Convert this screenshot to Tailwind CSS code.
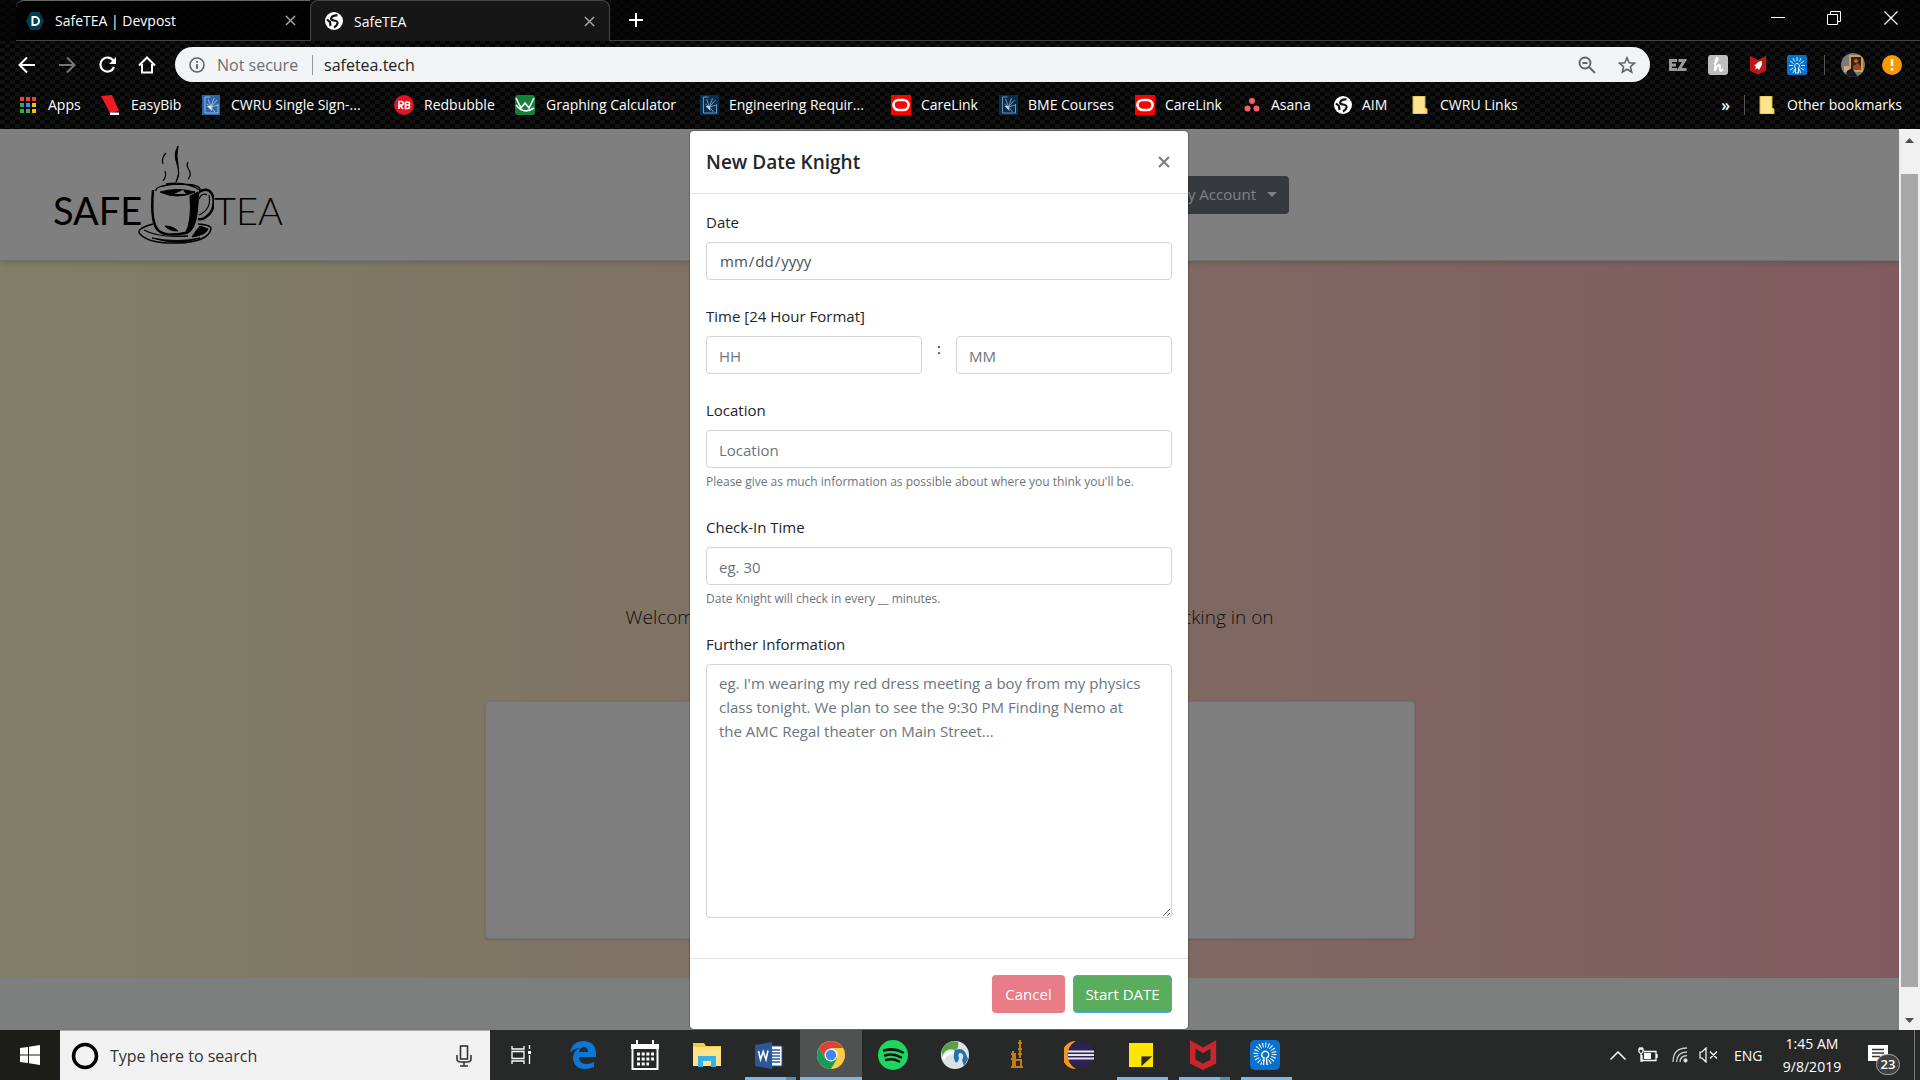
<!DOCTYPE html>
<html lang="en">
<head>
<meta charset="utf-8">
<title>SafeTEA</title>
<script src="https://cdn.jsdelivr.net/npm/@tailwindcss/browser@4"></script>
</head>
<body class="h-screen flex flex-col overflow-hidden bg-black font-['Open_Sans','Noto_Sans',sans-serif] text-[15px] text-[#212529]">
<svg class="hidden">
  <symbol id="globe" viewBox="0 0 18 18"><circle cx="9" cy="9" r="9" fill="#fff"/><path d="M12.500 3.500Q8 3 6.500 5.500T9 8.500q4 .5 3.500 3T9 15.500M2 7.500l3 2.500.5 4" fill="none" stroke="#111" stroke-width="2.200"/></symbol>
  <symbol id="cwru" viewBox="0 0 18 20"><path d="M3 2v16h13M16 9v9M3 2h5M9 12L6 4M9 12L12 3M9 12l6-7M9 12l7-2M9 12l-4-3M9 12l4 5" stroke="#b9cde0" stroke-width=".8" fill="none"/><path d="M5 11l4 0 1 5z" fill="#fff"/></symbol>
  <symbol id="oracle" viewBox="0 0 20 20"><path fill="#f00" d="M0 0h20v20H0z"/><rect x="2.500" y="5" width="15" height="10" rx="5" fill="none" stroke="#fff" stroke-width="2.600"/></symbol>
  <symbol id="folder" viewBox="0 0 16 18"><path d="M1 0h12v12l2 1v5H1z" fill="#ffe48e" stroke="#d9b13b"/><path d="M12.500 17v-4.500h2V17z" fill="#ffd75e"/></symbol>
  <symbol id="rays" viewBox="0 0 30 30"><rect width="30" height="30" rx="5" fill="#0672cb"/><g stroke="#fff" fill="none"><circle cx="15" cy="14" r="9" stroke-width="5" stroke-dasharray="1 1.827"/><path d="M12 21h6v7h-6z" fill="#0672cb" stroke="none"/><path d="M13.500 25l.5-7a3.500 3.500 0 1 1 2.500 0l.5 7" stroke-width="1.400"/></g></symbol>
</svg>

<header class="shrink-0 h-[129px] flex flex-col bg-[repeating-conic-gradient(#040404_0%_25%,#101111_0%_50%)] bg-[length:10px_8px] text-white text-[14px]">
  <div class="h-[41px] flex items-stretch bg-[#050505]/60">
    <div class="w-[294px] ml-4 pl-[10px] pr-[14px] flex items-center gap-[11px] border-t border-[#666] border-b border-b-[#444] rounded-tl-lg bg-black/60">
      <svg class="w-[18px] h-[18px]" viewBox="0 0 18 18"><path d="M4.500 0h9L18 9l-4.500 9h-9L0 9z" fill="#003e54"/><path d="M6.500 5v8h2.500a4 4 0 0 0 0-8z" fill="none" stroke="#fff" stroke-width="2"/></svg>
      <span class="flex-1">SafeTEA | Devpost</span>
      <button aria-label="Close tab" class="text-[#aaa]"><svg class="w-[11px] h-[11px]" viewBox="0 0 12 12" stroke="currentColor" stroke-width="1.500"><path d="M1 1l10 10M11 1L1 11"/></svg></button>
    </div>
    <div class="w-[300px] px-[14px] flex items-center gap-[11px] border border-b-0 border-[#444] rounded-t-lg bg-[#1b1b1b]/80">
      <svg class="w-[18px] h-[18px]"><use href="#globe"/></svg>
      <span class="flex-1">SafeTEA</span>
      <button aria-label="Close tab" class="text-[#aaa]"><svg class="w-[11px] h-[11px]" viewBox="0 0 12 12" stroke="currentColor" stroke-width="1.500"><path d="M1 1l10 10M11 1L1 11"/></svg></button>
    </div>
    <div class="flex-1 flex items-center justify-between pl-[18px] border-b border-[#444]">
      <button aria-label="New tab"><svg class="w-4 h-4" viewBox="0 0 16 16" stroke="#fff" stroke-width="2"><path d="M8 1v14M1 8h14"/></svg></button>
      <div class="flex self-start h-9">
        <button aria-label="Minimize" class="w-14 flex items-center justify-center"><svg class="w-[14px] h-[14px]" viewBox="0 0 14 14" stroke="#fff"><path d="M0 6.500h14"/></svg></button>
        <button aria-label="Restore" class="w-14 flex items-center justify-center"><svg class="w-[14px] h-[14px]" viewBox="0 0 14 14" stroke="#fff" fill="none"><path d="M.5 3.500h10v10H.5zM3.500 3V.5h10v10H11"/></svg></button>
        <button aria-label="Close" class="w-[58px] flex items-center justify-center"><svg class="w-[14px] h-[14px]" viewBox="0 0 14 14" stroke="#fff" stroke-width="1.200"><path d="M.5.5l13 13M13.500.5l-13 13"/></svg></button>
      </div>
    </div>
  </div>

  <div class="h-[47px] flex items-center pl-[18px] pr-[18px]">
    <button aria-label="Back" class="w-10"><svg class="w-[18px] h-[18px]" viewBox="0 0 18 18" fill="none" stroke="#fff" stroke-width="2"><path d="M17 9H2M9 1.500L1.500 9 9 16.500"/></svg></button>
    <button aria-label="Forward" class="w-10"><svg class="w-[18px] h-[18px]" viewBox="0 0 18 18" fill="none" stroke="#777" stroke-width="2"><path d="M1 9h15M9 1.500L16.500 9 9 16.500"/></svg></button>
    <button aria-label="Reload" class="w-10"><svg class="w-[20px] h-[18px]" viewBox="0 0 20 18"><path d="M15.500 5A7 7 0 1 0 16 11" fill="none" stroke="#fff" stroke-width="2.200"/><path d="M18 1v7h-7z" fill="#fff"/></svg></button>
    <button aria-label="Home" class="w-[37px]"><svg class="w-[18px] h-[18px]" viewBox="0 0 18 18" fill="none" stroke="#fff" stroke-width="2"><path d="M1 9.500L9 1.500l8 8M4 8v8.500h10V8"/></svg></button>
    <div class="flex-1 h-[35px] flex items-center rounded-full bg-[#f1f3f4] px-[14px] text-[16px] text-[#6b6f73]">
      <svg class="w-4 h-4 mr-3" viewBox="0 0 16 16" fill="none" stroke="#5f6368"><circle cx="8" cy="8" r="7" stroke-width="1.600"/><path d="M8 7v5M8 4v1.800" stroke-width="1.800"/></svg>
      <span class="w-[95px] whitespace-nowrap">Not secure</span>
      <span class="w-px h-5 bg-[#999] mr-[11px]"></span>
      <input aria-label="Address" value="safetea.tech" class="flex-1 bg-transparent text-[#222] outline-none">
      <button aria-label="Zoom" class="w-10 flex"><svg class="w-[18px] h-[18px]" viewBox="0 0 18 18" fill="none" stroke="#5f6368" stroke-width="1.800"><circle cx="7" cy="7" r="5.500"/><path d="M11 11l6 6M4.500 7h5"/></svg></button>
      <button aria-label="Bookmark this page" class="flex"><svg class="w-[18px] h-[18px]" viewBox="0 0 18 18" fill="none" stroke="#5f6368" stroke-width="1.600"><path d="M9 1.800l2.100 5 5.400.4-4.100 3.500 1.300 5.300L9 13.200 4.300 16l1.300-5.300L1.500 7.200l5.400-.4z"/></svg></button>
    </div>
    <div class="flex items-center pl-[19px]">
      <span class="w-[39px] flex"><svg class="w-[18px] h-3" viewBox="0 0 18 12" fill="none" stroke="#999" stroke-width="3"><path d="M8 1.500H1.500v9H8M2 6h5M9.500 1.500h6l-5.500 9h7.500"/></svg></span>
      <span class="w-[41px] flex"><svg class="w-[20px] h-[20px]" viewBox="0 0 20 20"><rect width="20" height="20" rx="3" fill="#bdbdbd"/><path d="M6 9c3-2 5-6 3-6-1.500 0-2 6-2 13 1-5 5-8 5-5 0 2-1 5 1 5l2-2" fill="none" stroke="#fff" stroke-width="1.800"/></svg></span>
      <span class="w-[38px] flex"><svg class="w-[18px] h-5" viewBox="0 0 28 32" fill="#c01818"><path d="M1 1l13 7L27 1v24l-13 6L1 25z"/><path d="M20 9c-6 1-8 4-9 6l-3 1 3 3-2 4 4-2 3 3 1-3c3-3 4-7 3-12z" fill="#fff"/></svg></span>
      <svg class="w-5 h-5" viewBox="0 0 20 20"><rect width="20" height="20" rx="2" fill="#0672cb"/><path d="M10 2v4M6 3l1.500 3.500M14 3l-1.500 3.500M3 6l3.500 2.500M17 6l-3.500 2.500M2 10.500h4M18 10.500h-4M3 15l3.500-2M17 15l-3.500-2M6 18l2-4M14 18l-2-4M8.500 13a2.500 2.500 0 1 1 3 0v5h-3z" fill="none" stroke="#fff" stroke-width=".9"/></svg>
      <span class="w-px h-5 bg-[#555] ml-[17px] mr-4"></span>
      <svg class="w-6 h-6 mr-[17px]" viewBox="0 0 24 24"><clipPath id="av"><circle cx="12" cy="12" r="12"/></clipPath><g clip-path="url(#av)"><path fill="#777a78" d="M0 0h24v24H0z"/><path fill="#d2a045" d="M8 2h14v17H8z"/><path fill="#33211a" d="M10 4h10v13H10z"/><circle cx="15" cy="8" r="2" fill="#a66b42"/><path fill="#8f4b30" d="M12 13l5-3 3 4v3h-8z"/><path fill="#cfa38a" d="M3 13h5v6H3z"/><path fill="#191622" d="M6 18l5-3 6 9H5z"/></g></svg>
      <svg class="w-5 h-5" viewBox="0 0 20 20"><circle cx="10" cy="10" r="10" fill="#f79a00"/><path d="M10 4v7M10 13v2.500" stroke="#fff" stroke-width="2.400"/></svg>
    </div>
  </div>

  <nav aria-label="Bookmarks" class="h-[33px] flex items-center pl-[19px] pr-[18px] whitespace-nowrap">
    <a href="#" class="w-[82px] flex items-center gap-[11px]"><svg class="w-[18px] h-[18px]" viewBox="0 0 18 18"><path fill="#ea4335" d="M1 1h4v4H1zM7 1h4v4H7zM13 1h4v4h-4z"/><path fill="#34a853" d="M1 7h4v4H1zM1 13h4v4H1z"/><path fill="#4285f4" d="M7 7h4v4H7z"/><path fill="#fbbc05" d="M13 7h4v4h-4zM13 13h4v4h-4z"/><path fill="#34a853" d="M7 13h4v4H7z"/></svg>Apps</a>
    <a href="#" class="w-[101px] flex items-center gap-[11px]"><svg class="w-[19px] h-5" viewBox="0 0 19 20"><path d="M0 1l11-1 7 16-9 2z" fill="#ee1c25"/><path d="M9 17.500h9V20H9z" fill="#fff"/></svg>EasyBib</a>
    <a href="#" class="w-[192px] flex items-center gap-[11px]"><svg class="w-[18px] h-5 bg-[#2f64ab]"><use href="#cwru"/></svg>CWRU Single Sign-...</a>
    <a href="#" class="w-[121px] flex items-center gap-[10px]"><svg class="w-5 h-5" viewBox="0 0 20 20"><circle cx="10" cy="10" r="10" fill="#e41321"/><path d="M5 14V6.500h2.500a1.600 1.600 0 0 1 0 3.500H6l3 4M11.500 7v6.500H14a1.600 1.600 0 0 0 0-3.300 1.600 1.600 0 0 0 0-3.200h-2.500M12 10h2" fill="none" stroke="#fff" stroke-width="1.700"/></svg>Redbubble</a>
    <a href="#" class="w-[185px] flex items-center gap-[11px]"><svg class="w-5 h-5" viewBox="0 0 20 20"><rect width="20" height="20" rx="3" fill="#15803c"/><path d="M1 3l5 10 4-5 4 5 5-10M1 10q8 10 18 3" fill="none" stroke="#fff" stroke-width="1.600"/></svg>Graphing Calculator</a>
    <a href="#" class="w-[191px] flex items-center gap-[10px]"><svg class="w-[19px] h-5 bg-[#0a2d52]"><use href="#cwru" class="opacity-80"/></svg>Engineering Requir...</a>
    <a href="#" class="w-[108px] flex items-center gap-[10px]"><svg class="w-5 h-5"><use href="#oracle"/></svg>CareLink</a>
    <a href="#" class="w-[136px] flex items-center gap-[10px]"><svg class="w-[19px] h-5 bg-[#0a2d52]"><use href="#cwru" class="opacity-80"/></svg>BME Courses</a>
    <a href="#" class="w-[109px] flex items-center gap-[10px]"><svg class="w-5 h-5"><use href="#oracle"/></svg>CareLink</a>
    <a href="#" class="w-[90px] flex items-center gap-[11px]"><svg class="w-4 h-4" viewBox="0 0 16 16" fill="#f95d6a"><circle cx="8" cy="4" r="3"/><circle cx="3.500" cy="11.500" r="3"/><circle cx="12.500" cy="11.500" r="3"/></svg>Asana</a>
    <a href="#" class="w-[78px] flex items-center gap-[10px]"><svg class="w-[18px] h-[18px]"><use href="#globe"/></svg>AIM</a>
    <a href="#" class="flex items-center gap-3"><svg class="w-4 h-[18px]"><use href="#folder"/></svg>CWRU Links</a>
    <button aria-label="More bookmarks" class="ml-auto font-semibold text-[16px]">»</button>
    <span class="w-px h-5 bg-[#555] mx-[14px]"></span>
    <a href="#" class="flex items-center gap-3"><svg class="w-4 h-[18px]"><use href="#folder"/></svg>Other bookmarks</a>
  </nav>
</header>

<main class="relative flex-1 min-h-0 flex">
  <div class="relative flex-1 flex flex-col bg-[#f8fffa]">
    <div class="h-[132px] relative z-1 bg-white border-b border-[#dee2e6] shadow-md flex items-center justify-between">
      <a href="#" aria-label="SafeTEA home" class="ml-[53px] mb-[5px] flex items-end w-[230px] h-[106px] text-black">
        <span class="w-[85px] text-[38px] leading-none pb-4 font-['Lato',sans-serif]">SAFE</span>
        <svg class="w-[76px] h-[100px] shrink-0" viewBox="0 0 76 100" fill="none" stroke="#000">
          <path d="M28 8q-5 5-3 11M27 26q2 5-2 10M50 17q-2 3 1 8t-1 9" stroke-width="1.200"/>
          <path d="M40 1q-5 8-1 18t-1 18q4-8 2-17t0-19z" fill="#000"/>
          <path d="M18 46q-2-5 20-7 26 0 24 6 0 5-8 7M28 39q20-3 34 6" stroke-width="1.300"/>
          <path d="M22 47q17-5 35 0-18 8-35 0z" fill="#000"/><path d="M36 49l9-4 3 4z" fill="#fff" stroke="none"/>
          <path d="M15 45q-3 34 6 41 8 6 26 2 10-2 13-39" stroke-width="2.500"/>
          <path d="M52 51q2 26-5 38 14-2 13-42z" fill="#000"/>
          <path d="M61 47q10-6 14 4 3 14-7 21-4 3-8 2" stroke-width="2.500"/><path d="M61 54q3-7 8-4M71 50q3 14-10 20" stroke-width="1.200"/>
          <path d="M15 79q-18 5-13 10 9 10 38 9 30-1 33-14 1-4-13-5" stroke-width="1.500"/>
          <path d="M62 81l8 3q-2 6-16 8l4-6zM27 81q8 0 13 5-9 0-13-5zM14 93q25 5 48 0-22 8-48 0z" fill="#000"/><path d="M6 85q14 8 44 6" stroke-width="1.300"/>
        </svg>
        <span class="text-[38px] leading-none pb-4 font-light font-['Lato',sans-serif]">TEA</span>
      </a>
      <button class="mr-[610px] h-[38px] px-3 rounded bg-[#6c757d] text-white flex items-center gap-[11px]">My Account <svg class="w-[10px] h-[5px]" viewBox="0 0 10 5"><path d="M0 0h10L5 5z" fill="#fff"/></svg></button>
    </div>
    <section class="h-[717px] bg-linear-to-r from-[#ffffcc] to-[#ffb7c1] flex flex-col items-center">
      <p class="w-[648px] mt-[340px] h-8 flex justify-between items-center text-[19px] font-light whitespace-nowrap"><span>Welcome</span><span>checking in on</span></p>
      <div class="w-[930px] h-[238px] mt-[68px] rounded bg-white border border-[#dee2e6] shadow"></div>
    </section>
    <footer class="flex-1"></footer>
    <div class="absolute inset-0 z-2 bg-black/50"></div>
  </div>

  <div aria-hidden="true" class="w-[21px] bg-[#f1f1f1] flex flex-col items-center pt-[9px] pb-[7px]">
    <svg class="w-[9px] h-[5px]" viewBox="0 0 9 5"><path d="M0 5h9L4.500 0z" fill="#505050"/></svg>
    <div class="w-[17px] mt-[31px] mb-[31px] flex-1 bg-[#a8a8a8]"></div>
    <svg class="w-[9px] h-[5px]" viewBox="0 0 9 5"><path d="M0 0h9L4.500 5z" fill="#505050"/></svg>
  </div>

  <div class="absolute inset-0 z-10 flex items-start justify-center pr-[42px] pt-px">
    <form role="dialog" aria-labelledby="title" class="w-[500px] bg-white border border-black/20 bg-clip-padding rounded-[5px]">
      <div class="h-[63px] px-4 flex items-center justify-between border-b border-[#dee2e6]">
        <h1 id="title" class="text-[19px] font-semibold">New Date Knight</h1>
        <button type="button" aria-label="Close" class="text-[#7f7f7f] pr-[2px]"><svg class="w-3 h-3" viewBox="0 0 12 12" stroke="currentColor" stroke-width="2.200"><path d="M1 1l10 10M11 1L1 11"/></svg></button>
      </div>
      <div class="px-4 pt-4 pb-10 flex flex-col gap-6 border-b border-[#dee2e6]">
        <div>
          <label for="date" class="block leading-6 mb-2">Date</label>
          <input id="date" type="date" class="block w-full h-[38px] px-3 border border-[#ced4da] rounded text-[#495057] [&::-webkit-calendar-picker-indicator]:hidden">
        </div>
        <div>
          <label for="hh" class="block leading-6 mb-2">Time [24 Hour Format]</label>
          <div class="flex">
            <input id="hh" placeholder="HH" class="flex-1 min-w-0 h-[38px] px-3 pt-px border border-[#ced4da] rounded placeholder:text-[#6c757d]">
            <span class="w-[34px] text-center leading-6">:</span>
            <input aria-label="Minutes" placeholder="MM" class="flex-1 min-w-0 h-[38px] px-3 pt-px border border-[#ced4da] rounded placeholder:text-[#6c757d]">
          </div>
        </div>
        <div>
          <label for="loc" class="block leading-6 mb-2">Location</label>
          <input id="loc" placeholder="Location" class="block w-full h-[38px] px-3 pt-px border border-[#ced4da] rounded placeholder:text-[#6c757d]">
          <p class="mt-[5px] text-[12px] leading-[18px] text-[#6c757d]">Please give as much information as possible about where you think you'll be.</p>
        </div>
        <div>
          <label for="check" class="block leading-6 mb-2">Check-In Time</label>
          <input id="check" placeholder="eg. 30" class="block w-full h-[38px] px-3 pt-px border border-[#ced4da] rounded placeholder:text-[#6c757d]">
          <p class="mt-[5px] text-[12px] leading-[18px] text-[#6c757d]">Date Knight will check in every __ minutes.</p>
        </div>
        <div>
          <label for="info" class="block leading-6 mb-2">Further Information</label>
          <textarea id="info" rows="10" placeholder="eg. I'm wearing my red dress meeting a boy from my physics class tonight. We plan to see the 9:30 PM Finding Nemo at the AMC Regal theater on Main Street..." class="block w-full h-[254px] pl-3 pr-6 py-[6px] leading-6 border border-[#ced4da] rounded placeholder:text-[#6c757d]"></textarea>
        </div>
      </div>
      <div class="px-4 pt-4 pb-4 flex justify-end gap-2 text-white">
        <button type="button" class="w-[73px] h-[38px] rounded bg-[#e87c87]">Cancel</button>
        <button type="button" class="w-[99px] h-[38px] rounded bg-[#5aad5c] border border-[#4da3f5] whitespace-nowrap">Start DATE</button>
      </div>
    </form>
  </div>
</main>

<footer class="shrink-0 h-[50px] flex items-stretch bg-[#272929] text-white">
  <button aria-label="Start" class="w-[60px] flex items-center justify-center bg-[#1c1d18]"><svg class="w-5 h-5" viewBox="0 0 20 20" fill="#fff"><path d="M0 3l8-1v7.500H0zM9 1.800L20 0v9.500H9zM0 10.500h8V18l-8-1zM9 10.500h11V20L9 18.200z"/></svg></button>
  <label class="w-[430px] flex items-center bg-[#f2f2f2] border-t border-[#aaa] pl-[11px] pr-[18px] gap-[11px] text-[16px]">
    <svg class="w-7 h-7" viewBox="0 0 28 28"><circle cx="14" cy="14" r="11.500" fill="none" stroke="#000" stroke-width="3.500"/></svg>
    <input placeholder="Type here to search" class="flex-1 placeholder:text-[#333] outline-none">
    <svg class="w-4 h-[22px]" viewBox="0 0 16 22" fill="none" stroke="#333" stroke-width="1.600"><rect x="4.500" y="1" width="7" height="13"/><path d="M1 10v4q0 3 4 3h6q4 0 4-3v-4M8 17v4M4 21h8"/></svg>
  </label>
  <div class="flex [&>button]:w-[62px] [&>button]:relative [&>button]:flex [&>button]:items-center [&>button]:justify-center">
    <button aria-label="Task View"><svg class="w-5 h-5" viewBox="0 0 20 20" fill="none" stroke="#fff" stroke-width="1.300"><path d="M1 1v3h12V1M1 19v-3h12v3M1 6.500h12v7H1zM18.500 0v4M18.500 10v9"/><path d="M17 6h3v3h-3z" fill="#fff" stroke="none"/></svg></button>
    <button aria-label="Edge"><svg class="w-[26px] h-[28px]" viewBox="0 0 26 28"><path d="M0 12Q2 0 14 0q12 1 12 13v3H9q0 7 7 7 5 0 8-2v5q-4 2-10 2Q3 27 3 16 4 9 10 7q-6 0-10 5zm9-1h9q0-5-4-5t-5 5z" fill="#0a78d6"/></svg></button>
    <button aria-label="Calendar"><svg class="w-7 h-[30px]" viewBox="0 0 28 30" fill="none" stroke="#fff" stroke-width="2"><path d="M1.500 5h25v24h-25zM6 0v6M22 0v6"/><path d="M1 5h26v3H1z" fill="#fff"/><path d="M6 14h17M6 19h17M6 24h12" stroke-width="3" stroke-dasharray="3 1.700"/></svg></button>
    <button aria-label="File Explorer"><svg class="w-7 h-6" viewBox="0 0 28 24"><path d="M0 0h11l2 3h15v20H0z" fill="#f6c842"/><path d="M0 4h28v19H0z" fill="#ffe28a"/><path d="M5 24V13h18v11h-5v-6h-8v6z" fill="#38b2e6"/></svg></button>
    <button aria-label="Word"><svg class="w-7 h-[27px]" viewBox="0 0 28 27"><path d="M14 4h13v20H14z" fill="#fff" stroke="#2b579a"/><path d="M17 8h8M17 11h8M17 14h8M17 17h8M17 20h8" stroke="#2b579a" stroke-width="1.500"/><path d="M0 3l17-3v27L0 24z" fill="#2b579a"/><path d="M3.500 9l2 8.500 2.700-8 2.800 8 2-9" fill="none" stroke="#fff" stroke-width="1.600"/></svg><span class="absolute bottom-0 left-[7px] w-[51px] h-[3px] bg-[linear-gradient(90deg,#76b9ed_80%,#5a8cb3_80%)]"></span></button>
    <button aria-label="Chrome" class="bg-[#505151]"><svg class="w-7 h-7" viewBox="0 0 28 28"><circle cx="14" cy="14" r="14" fill="#fc4"/><path d="M1.900 7A14 14 0 0 1 26.100 7H14L8 17.500z" fill="#db4437"/><path d="M1.900 7A14 14 0 0 0 14 28l6.100-10.500H8z" fill="#0f9d58"/><circle cx="14" cy="14" r="6.500" fill="#fff"/><circle cx="14" cy="14" r="5.200" fill="#4285f4"/></svg><span class="absolute bottom-0 left-0 w-full h-[3px] bg-[#76b9ed]"></span></button>
    <button aria-label="Spotify"><svg class="w-[30px] h-[30px]" viewBox="0 0 30 30"><circle cx="15" cy="15" r="15" fill="#1ed760"/><path d="M6 10.500q10-3 19 2M7 15.500q8-2.500 16 1.800M8 20q7-2 13 1.500" fill="none" stroke="#111" stroke-width="2.500" stroke-linecap="round"/></svg></button>
    <button aria-label="Network client"><svg class="w-7 h-7" viewBox="0 0 28 28"><circle cx="14" cy="14" r="14" fill="#dde2e5"/><path d="M1 16Q4 6 14 9q4-1 3-8Q6-2 1 9z" fill="#5ba047"/><path d="M2 18Q8 9 15 13" fill="none" stroke="#fff" stroke-width="3"/><path d="M14 9q8-3 11 4l2 5-4 7-2-6q3-5-1-7-4 0-2 5 0 3-3 5-4-6-1-13z" fill="#2272ae"/></svg></button>
    <button aria-label="Molecular tool"><svg class="w-[14px] h-[30px]" viewBox="0 0 14 30" fill="none" stroke="#c57a18" stroke-width="2"><path d="M10 0v18M8 3h4M8 9h4M8 14h4M3 11v17M5 13v15M1 14h5M1 19h5M6 20h5M1 27h12M11 19v9"/></svg></button>
    <button aria-label="Eclipse"><svg class="w-[30px] h-7" viewBox="0 0 30 28"><path d="M12 0a14 14 0 0 0 0 28A16 16 0 0 1 12 0z" fill="#f7941e"/><circle cx="17" cy="14" r="13" fill="#2c2255"/><path d="M4 10.500h26M4 14h26M4 17.500h26" stroke="#e4e2ee" stroke-width="1.800"/></svg></button>
    <button aria-label="Sticky Notes"><svg class="w-6 h-6" viewBox="0 0 24 24"><path d="M0 0h24v24H0z" fill="#ffe500"/><path d="M12 24V13h12z" fill="#2a2a2a"/><path d="M12 24V13h12z" fill="none" stroke="#ffe500" stroke-width=".8"/></svg><span class="absolute bottom-0 left-[7px] w-[51px] h-[3px] bg-[#76b9ed]"></span></button>
    <button aria-label="McAfee"><svg class="w-7 h-[30px]" viewBox="0 0 28 32"><path d="M0 0l14 8L28 0v25l-14 7L0 25zM6 9v12l8 4 8-4V9l-8 5z" fill="#c8252c" fill-rule="evenodd"/></svg><span class="absolute bottom-0 left-[7px] w-[51px] h-[3px] bg-[linear-gradient(90deg,#76b9ed_80%,#5a8cb3_80%)]"></span></button>
    <button aria-label="Sunburst app"><svg class="w-[30px] h-[30px]"><use href="#rays"/></svg><span class="absolute bottom-0 left-[7px] w-[51px] h-[3px] bg-[#76b9ed]"></span></button>
  </div>
  <div class="ml-auto flex items-center text-[14px]">
    <svg class="w-4 h-[9px] mr-[12px]" viewBox="0 0 16 9" fill="none" stroke="#fff" stroke-width="1.500"><path d="M.5 8.500L8 1l7.500 7.500"/></svg>
    <svg class="w-5 h-4 mr-[14px]" viewBox="0 0 20 16" fill="none" stroke="#fff" stroke-width="1.300"><path d="M6 4.500h12v9H4V8M19 7v4M1 2v3q2 3 4 0V2zM2 0v2M4 0v2M3 6v8h2"/><path d="M6 6h7v6H6z" fill="#fff" stroke="none"/></svg>
    <svg class="w-4 h-4 mr-[11px]" viewBox="0 0 16 16" fill="none" stroke="#ccc" stroke-width="1.300"><path d="M1 15Q1 1 15 1M4.500 15Q5 5 15 5M8 15q0-6 7-6.500"/><circle cx="13.500" cy="13.500" r="1.500" fill="#fff"/></svg>
    <svg class="w-[19px] h-4 mr-4" viewBox="0 0 19 16" fill="none" stroke="#fff" stroke-width="1.200"><path d="M1 5h2l4-4v14l-4-4H1zM11 4.500l7 7M18 4.500l-7 7"/></svg>
    <span class="w-[45px]">ENG</span>
    <div class="w-[66px] text-center leading-[23px] whitespace-nowrap">1:45 AM<br>9/8/2019</div>
    <button aria-label="Notifications" class="relative ml-[23px] mr-[26px]"><svg class="w-5 h-5" viewBox="0 0 20 20"><path d="M0 0h20v16h-7l-3 4v-4H0z" fill="#fff"/><path d="M4 4.500h12M4 8h12M4 11.500h8" stroke="#333" stroke-width="1.400"/></svg><span class="absolute left-2 top-[9px] w-6 h-[21px] rounded-full bg-[#404242] border border-[#aaa] text-[13px] leading-[18px] font-semibold">23</span></button>
    <span class="w-px h-full bg-[#777] mr-[5px]"></span>
  </div>
</footer>
</body>
</html>
